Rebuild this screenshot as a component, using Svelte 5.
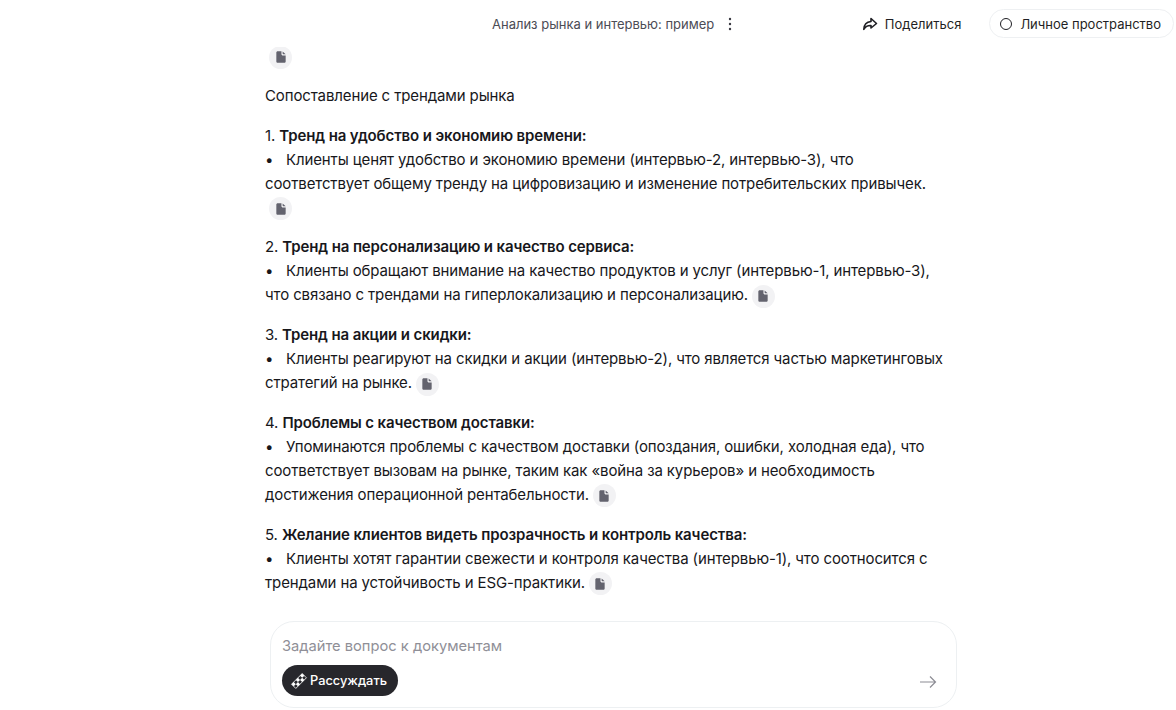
<script>
  const blocks = [
    { num: 1, title: 'Тренд на удобство и экономию времени:', lines: ['Клиенты ценят удобство и экономию времени (интервью-2, интервью-3), что', 'соответствует общему тренду на цифровизацию и изменение потребительских привычек.'], own: true },
    { num: 2, title: 'Тренд на персонализацию и качество сервиса:', lines: ['Клиенты обращают внимание на качество продуктов и услуг (интервью-1, интервью-3),', 'что связано с трендами на гиперлокализацию и персонализацию.'] },
    { num: 3, title: 'Тренд на акции и скидки:', lines: ['Клиенты реагируют на скидки и акции (интервью-2), что является частью маркетинговых', 'стратегий на рынке.'] },
    { num: 4, title: 'Проблемы с качеством доставки:', lines: ['Упоминаются проблемы с качеством доставки (опоздания, ошибки, холодная еда), что', 'соответствует вызовам на рынке, таким как «война за курьеров» и необходимость', 'достижения операционной рентабельности.'] },
    { num: 5, title: 'Желание клиентов видеть прозрачность и контроль качества:', lines: ['Клиенты хотят гарантии свежести и контроля качества (интервью-1), что соотносится с', 'трендами на устойчивость и ESG-практики.'] }
  ];
</script>

{#snippet chip()}
  <span class="chip">
    <svg width="14" height="14" viewBox="0 0 12 12"><path d="M2 2.200C2 1.500 2.500 1 3.200 1H6.400V3.400C6.400 4.200 6.900 4.700 7.700 4.700H10V9.800C10 10.500 9.500 11 8.800 11H3.200C2.500 11 2 10.500 2 9.800ZM7.400 1.200L10 3.700H8C7.600 3.700 7.400 3.500 7.400 3.100Z" fill="#63636e"/></svg>
  </span>
{/snippet}

<div class="page">
  <header>
    <div class="title">
      <span>Анализ рынка и интервью: пример</span>
      <svg class="dots" width="4" height="14" viewBox="0 0 4 14"><circle cx="2" cy="2" r="1.200"/><circle cx="2" cy="7" r="1.200"/><circle cx="2" cy="12" r="1.200"/></svg>
    </div>
    <div class="actions">
      <button class="share">
        <svg width="16" height="14" viewBox="0 0 16 14" fill="none" stroke="#1f1f24" stroke-width="1.600" stroke-linejoin="round"><path d="M9 1.500L14.500 6.500L9 11V8.500C6 8.300 3.500 9.500 1.800 12.300C2 7.800 4.500 5 9 4.500Z"/></svg>
        Поделиться
      </button>
      <button class="space"><span class="ring"></span>Личное пространство</button>
    </div>
  </header>

  <div class="scroller">
    <div class="column">
      <p class="chip-line">{@render chip()}</p>
      <p>Сопоставление с трендами рынка</p>
      {#each blocks as b}
        <p>
          {b.num}. <b>{b.title}</b><br />
          {#each b.lines as line, i}
            {#if i === 0}<span class="bullet">•</span>{/if}{line}{#if i === b.lines.length - 1 && !b.own}{@render chip()}{/if}{#if i < b.lines.length - 1}<br />{/if}
          {/each}
          {#if b.own}<br />{@render chip()}{/if}
        </p>
      {/each}
    </div>
  </div>

  <div class="composer">
    <div class="placeholder">Задайте вопрос к документам</div>
    <div class="composer-row">
      <button class="think">
        <svg width="18" height="18" viewBox="0 0 18 18" fill="#fff">
          <g transform="rotate(-45 9 9)">
            <rect x="1.500" y="6" width="3" height="3" />
            <rect x="4.500" y="9" width="3" height="3" />
            <rect x="7.500" y="6" width="3" height="3" />
            <rect x="10.500" y="9" width="3" height="3" />
            <rect x="13.500" y="6" width="3" height="3" />
            <rect x="1.500" y="6" width="15" height="6" fill="none" stroke="#fff" stroke-width=".8" />
          </g>
        </svg>
        Рассуждать
      </button>
      <svg class="send" width="18" height="14" viewBox="0 0 18 14" fill="none" stroke="#8c8c94" stroke-width="1.200"><path d="M1 7H16.500M11 1.500L16.500 7L11 12.500"/></svg>
    </div>
  </div>
</div>

<style>
  :global(body) {
    margin: 0;
    background: #fff;
  }
  .page {
    height: 710px;
    display: flex;
    flex-direction: column;
    overflow: hidden;
    font-family: Inter, "Noto Sans", sans-serif;
    color: #17171b;
    font-size: 15px;
    letter-spacing: -0.12px;
  }
  header {
    height: 47px;
    flex: none;
    display: flex;
    align-items: center;
    justify-content: flex-end;
    position: relative;
  }
  .title {
    position: absolute;
    left: 492px;
    top: 14px;
    display: flex;
    align-items: center;
    gap: 14px;
    font-size: 13px;
    letter-spacing: 0;
    color: #4c4c55;
    line-height: 20px;
  }
  .dots { fill: #3a3a42; }
  .actions {
    display: flex;
    align-items: center;
    gap: 28px;
    margin-right: 2px;
  }
  button {
    font: inherit;
    font-size: 13px;
    letter-spacing: 0;
    color: #1f1f24;
    background: none;
    border: 0;
    padding: 0;
    display: flex;
    align-items: center;
  }
  .share { gap: 7px; }
  .space {
    height: 29px;
    padding: 0 12px 0 10px;
    gap: 8px;
    border: 1px solid #eef0f2;
    border-radius: 15px;
    box-sizing: border-box;
  }
  .ring {
    width: 10px;
    height: 10px;
    border: 1.500px solid #1f1f24;
    border-radius: 50%;
  }
  .scroller {
    flex: 1;
    min-height: 0;
    overflow: hidden;
    display: flex;
    flex-direction: column;
    justify-content: flex-end;
    padding-left: 265px;
  }
  .column {
    width: 700px;
    padding-bottom: 26px;
  }
  p {
    margin: 0 0 15.350px;
    line-height: 24px;
  }
  p:last-child { margin-bottom: 0; }
  b { font-weight: 600; }
  .bullet {
    display: inline-block;
    width: 21px;
  }
  .chip {
    display: inline-flex;
    align-items: center;
    justify-content: center;
    width: 23px;
    height: 23px;
    border-radius: 50%;
    background: #f2f2f4;
    vertical-align: middle;
    margin-left: 4px;
  }
  .composer {
    flex: none;
    box-sizing: border-box;
    width: 687px;
    height: 87px;
    margin: 0 0 2px 270px;
    padding: 14px 11px 10px;
    border: 1px solid #edf0f2;
    border-radius: 24px;
  }
  .placeholder {
    font-size: 14.700px;
    letter-spacing: 0;
    line-height: 20px;
    color: #8f8f97;
  }
  .composer-row {
    margin-top: 9px;
    display: flex;
    align-items: center;
    justify-content: space-between;
  }
  .think {
    height: 31px;
    padding: 0 11px 0 8px;
    gap: 2px;
    border-radius: 16px;
    background: #27272c;
    color: #fff;
    font-size: 12.800px;
    font-weight: 500;
  }
  .send { margin-right: 8px; margin-top: 2px; }
</style>
